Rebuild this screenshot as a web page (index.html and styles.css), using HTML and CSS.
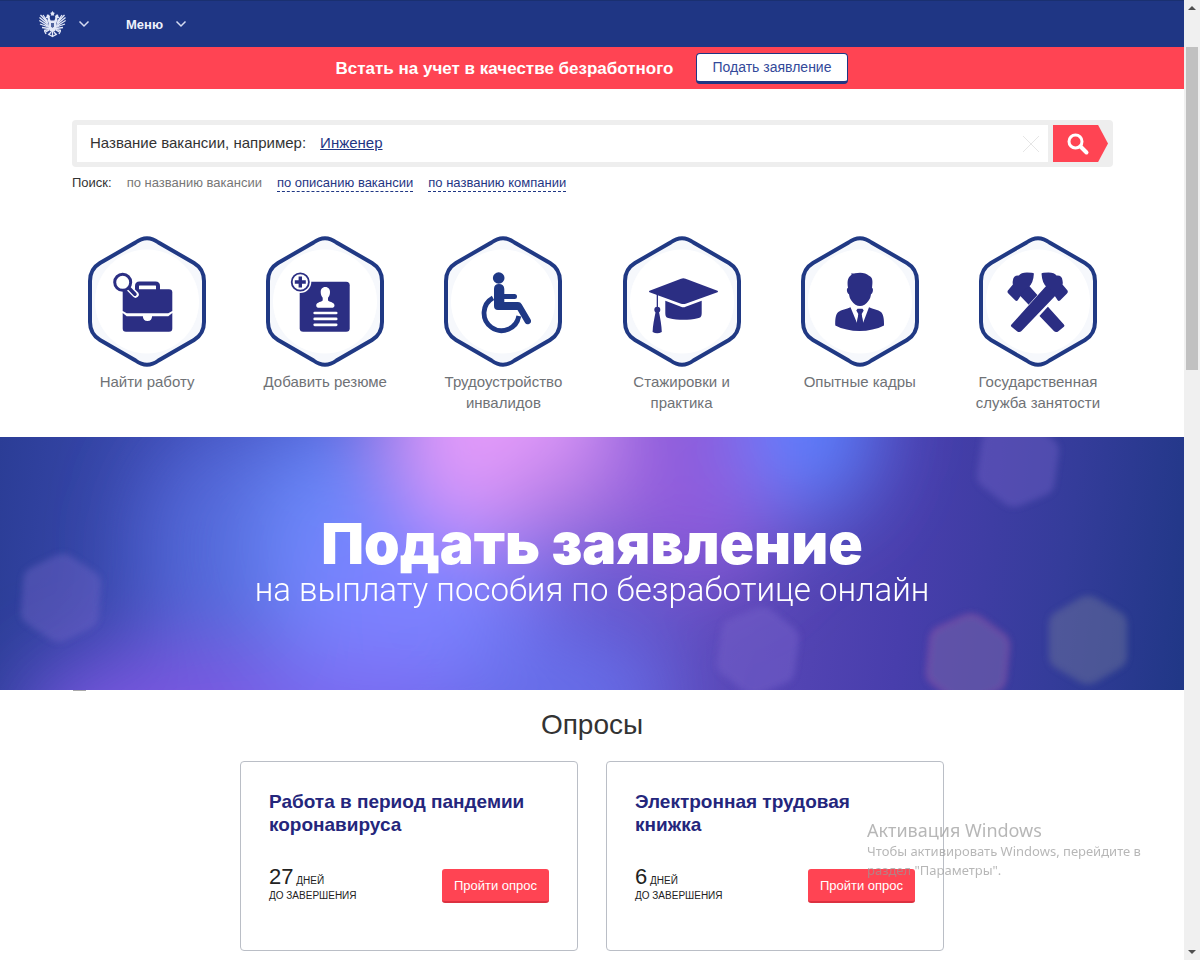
FILE: index.html
```html
<!DOCTYPE html>
<html lang="ru">
<head>
<meta charset="utf-8">
<title>Работа в России</title>
<link rel="stylesheet" href="styles.css">
</head>
<body>
<svg class="defs" aria-hidden="true">
  <symbol id="hex" viewBox="0 0 118 131">
    <path d="M47.500 6.500Q59-2 70.500 6.500L106 27Q116 33 116 45V86Q116 98 106 104L70.500 124.500Q59 133 47.500 124.500L12 104Q2 98 2 86V45Q2 33 12 27Z" fill="#f6f8fc" stroke="#203984" stroke-width="4"/>
    <circle cx="59" cy="65.500" r="52" fill="#fff"/>
  </symbol>
  <symbol id="chev" viewBox="0 0 12 8"><path d="M1.500 1.500L6 6l4.500-4.500" fill="none" stroke="#d5dcf2" stroke-width="1.500"/></symbol>
</svg>
<div class="page">
  <header class="top">
    <button class="top-btn" aria-label="Государственные сайты">
      <svg class="eagle" viewBox="0 0 27 27" fill="#e4e9f8">
        <path d="M13.500 0l1 1.500 1.500.5-1.200 1 .5 1.500h-3.600l.5-1.500-1.200-1 1.500-.5z"/>
        <path d="M8 3.500l2 .3 1 1.700-.3 1.500 1 3L10 12 8.500 9.500l.3-2.200L6.500 7l1-1.500zM19 3.500l-2 .3-1 1.700.3 1.500-1 3L17 12l1.500-2.500-.3-2.200 2.300-.3-1-1.500z"/>
        <path d="M10 9.500h7l1 6-1.500 4-3 2-3-2-1.500-4z"/>
        <g fill="none" stroke="#e4e9f8" stroke-width="1.300">
          <path d="M9 12L1.500 4M9 13.500L.5 6.500M9 15L.3 9.500M9.500 16L1 13M10 17.500L3 16.500M10 18.500l-5 1M8.500 10.500L4 4M18 12l7.500-8M18 13.500L26.500 6.500M18 15l8.700-5.500M17.500 16l8.500-3M17 17.500l7-1M17 18.500l5 1M18.500 10.500L23 4"/>
          <path d="M10 19l-4 2.500M5.500 20l1.500 3M17 19l4 2.500M21.500 20l-1.500 3M12 21l-2.500 3M15 21l2.500 3M13.500 20v6M9 23l4.500 2.500L18 23"/>
        </g>
        <path d="M12 12h3v3.500l-1.500 1.500-1.500-1.500z" fill="#52659f"/>
      </svg>
      <svg class="chev"><use href="#chev"/></svg>
    </button>
    <button class="top-btn">Меню <svg class="chev"><use href="#chev"/></svg></button>
  </header>
  <section class="notice">
    <strong>Встать на учет в качестве безработного</strong>
    <button class="notice-btn">Подать заявление</button>
  </section>

  <main>
    <div class="wrap">
      <form class="search">
        <div class="field">
          <label for="q">Название вакансии, например:</label>
          <a href="#">Инженер</a>
          <input id="q" type="text">
          <button class="clear" type="button" aria-label="Очистить"><svg viewBox="0 0 18 18"><path d="M1 1l16 16M17 1L1 17" stroke="#e6e6e6"/></svg></button>
        </div>
        <button class="go" type="button" aria-label="Найти"><svg viewBox="0 0 24 24" fill="none" stroke="#fff"><circle cx="9.500" cy="9.500" r="6.500" stroke-width="3"/><path d="M14.500 14.500l6 6" stroke-width="4" stroke-linecap="round"/></svg></button>
      </form>
      <nav class="modes">
        <span>Поиск:</span><span class="current">по названию вакансии</span>
        <a href="#">по описанию вакансии</a><a href="#">по названию компании</a>
      </nav>
      <nav class="services">
        <a href="#"><svg viewBox="0 0 118 131" fill="#2b2e83"><use href="#hex"/>
          <path d="M49 54v-4q0-2.500 2.500-2.500h16q2.500 0 2.500 2.500v4" fill="none" stroke="#2b2e83" stroke-width="4"/>
          <path d="M38 53.300h43q3.300 0 3.300 3.300V75l-4 2.300H38.700l-4-2.300V56.600q0-3.300 3.300-3.300z"/>
          <path d="M34.700 77l4 3.300h16.200q0 4.700 4.600 4.700t4.500-4.700h16.300l4-3.300v15.400q0 3.300-3.300 3.300H38q-3.300 0-3.300-3.300z"/>
          <path d="M40.500 51.500l7 7" stroke="#fff" stroke-width="6.500" stroke-linecap="round"/><circle cx="34.700" cy="46.300" r="8" fill="#fff" stroke="#2b2e83" stroke-width="3"/><path d="M41 52l6 6.200" stroke="#2b2e83" stroke-width="3.500" stroke-linecap="round"/></svg>
          <span>Найти работу</span></a>
        <a href="#"><svg viewBox="0 0 118 131" fill="#2b2e83"><use href="#hex"/>
          <rect x="33.700" y="45.700" width="50" height="50" rx="3.500"/>
          <circle cx="34.300" cy="46" r="11" fill="#fff"/><circle cx="34.300" cy="46" r="8.600" fill="#fff" stroke="#2b2e83" stroke-width="1.800"/><path d="M34.300 40.500v11M28.800 46h11" stroke="#2b2e83" stroke-width="3.400"/>
          <path fill="#fff" d="M59.300 51c3.200 0 4.700 2.400 4.700 5 0 2.800-1 4.400-2 5.700v2.500c0 1.500 6.500 1.800 6.500 5 0 2-1.200 2.500-3 2.500H53.200c-1.800 0-3-.5-3-2.500 0-3.200 6.500-3.500 6.500-5v-2.500c-1-1.300-2-2.900-2-5.700 0-2.600 1.400-5 4.600-5z"/>
          <path d="M48.700 77h21.500M48.700 82.900h21.500M48.700 88.800h21.500" stroke="#fff" stroke-width="2.700" stroke-linecap="round"/></svg>
          <span>Добавить резюме</span></a>
        <a href="#"><svg viewBox="0 0 118 131" fill="#1f3885"><use href="#hex"/>
          <circle cx="54.700" cy="42" r="5.800"/>
          <path d="M49 61.800A17.500 17.500 0 1 0 74.800 80" fill="none" stroke="#1f3885" stroke-width="4.800"/>
          <path d="M50 53q0-5 5-5t5.300 5v5h10.200q2.500 0 2.500 2.500T70.500 63H60.300v3H74q2.500 0 3.700 2.200l8.800 15q1.500 3-1 4.500-3 1.500-4.500-1L73.500 74H54q-4 0-4-4z"/></svg>
          <span>Трудоустройство инвалидов</span></a>
        <a href="#"><svg viewBox="0 0 118 131" fill="#2b2e83"><use href="#hex"/>
          <path d="M26.500 54.700l31.500-12q2.300-.8 4.600 0l31.900 12q1.300.7 0 1.500L62.600 67.700q-2.300.8-4.600 0L26.500 56.200q-1.300-.8 0-1.500z"/>
          <path d="M42.300 64.700l15.700 6q2.300 1 4.600 0l16.100-6V77c0 4-1.400 4.700-4 5.300-9 2-19.600 2-28.400 0-2.600-.6-4-1.300-4-5.300z"/>
          <path d="M33.700 56h1.300v15h-1.300z"/><circle cx="34.300" cy="73.700" r="3"/><path d="M32.600 76h3.400c1.300 7 2.600 13 2.800 20q-4.600 2.500-9.200 0c.2-7 1.700-13 3-20z"/></svg>
          <span>Стажировки и практика</span></a>
        <a href="#"><svg viewBox="0 0 118 131" fill="#2b2e83"><use href="#hex"/>
          <path d="M50.500 37q1.500 1 3.500.3c6-1.300 11-.4 14 2.400 4 1.500 3.800 6 3 12 1.700.5 1 5.800-1 6.500-.5 3-1 4.500-2.500 6.500-4.500 7-12.500 7-17 0-1.500-2-2-3.500-2.500-6.500-2-.7-3-6-1-6.500-.8-5.500-.8-10 3.500-13z"/>
          <path d="M49.500 71.300L56 87l1.300-9-2-3.500 1.200-1.800h5l1.200 1.800-2 3.500L62 87l6-15.700c4 2 9 2.300 12 4.700 2.500 2 3.200 8 3 13.500-14 7.300-35 7.300-48.700 0-.2-5.500.2-11.500 3-13.500 3-2.400 8.200-2.700 12.200-4.700z"/>
          <path d="M57.600 78.500h2.800l2 9-3.400 6-3.400-6z"/></svg>
          <span>Опытные кадры</span></a>
        <a href="#"><svg viewBox="0 0 118 131" fill="#2b2e83"><use href="#hex"/>
          <g transform="matrix(-1 0 0 1 117.400 0)"><path d="M32.500 88.500L68 49l10 9-35.500 37q-2 2-4.500.2l-5.500-4.500q-1.200-1 0-2.200z"/><path d="M62.500 37.500q1-1 7-1t8 3q5.500-.5 6 5 .5 2 0 4l5 6q1 1.500-.5 3l-7 7q-1.500 1-2.500-.5L74.500 58q-1-4-6-6.200-5.500-3.800-6-14.300z"/></g>
          <path d="M42 77l26-28.500 12 10-26 28.500z" fill="#fff"/>
          <path d="M32.500 88.500L68 49l10 9-35.500 37q-2 2-4.500.2l-5.500-4.500q-1.200-1 0-2.200z"/>
          <path d="M62.500 37.500q1-1 7-1t8 3q5.500-.5 6 5 .5 2 0 4l5 6q1 1.500-.5 3l-7 7q-1.500 1-2.500-.5L74.500 58q-1-4-6-6.200-5.500-3.800-6-14.300z"/></svg>
          <span>Государственная служба занятости</span></a>
      </nav>
    </div>

    <section class="banner">
      <svg class="bokeh" viewBox="0 0 1184 253" preserveAspectRatio="none" aria-hidden="true">
        <defs>
          <filter id="glow" filterUnits="userSpaceOnUse" x="-200" y="-250" width="1600" height="750"><feGaussianBlur stdDeviation="42"/></filter>
          <filter id="soft" x="-20%" y="-20%" width="140%" height="140%"><feGaussianBlur stdDeviation="3"/></filter>
          <path id="spot" d="M-8-42Q0-46 8-42L32-28Q39-24 39-16V16Q39 24 32 28L8 42Q0 46-8 42L-32 28Q-39 24-39 16V-16Q-39-24-32-28Z"/>
        </defs>
        <g filter="url(#glow)">
          <ellipse cx="230" cy="110" rx="90" ry="120" fill="#5268d8"/>
          <ellipse cx="330" cy="110" rx="75" ry="120" fill="#6a88fa"/>
          <ellipse cx="190" cy="290" rx="170" ry="80" fill="#7a56e0"/>
          <ellipse cx="410" cy="170" rx="110" ry="100" fill="#7c82ff"/>
          <ellipse cx="360" cy="275" rx="120" ry="50" fill="#7a68f0"/>
          <ellipse cx="560" cy="260" rx="110" ry="60" fill="#666eea"/>
          <ellipse cx="700" cy="30" rx="90" ry="120" fill="#8f5cdc"/>
          <ellipse cx="500" cy="-20" rx="110" ry="125" fill="#e49cfb"/>
          <ellipse cx="560" cy="60" rx="60" ry="50" fill="#b87de6"/>
          <ellipse cx="810" cy="-15" rx="66" ry="95" fill="#5c80ff"/>
        </g>
        <g filter="url(#soft)">
          <use href="#spot" transform="translate(61 161) rotate(4)" fill="#7566c8" opacity=".4"/>
          <use href="#spot" transform="translate(1018 26) rotate(8)" fill="#7565c8" opacity=".4"/>
          <use href="#spot" transform="translate(758 214) rotate(8)" fill="#735fc9" opacity=".55"/>
          <use href="#spot" transform="translate(968 222) rotate(6)" fill="#735faa" stroke="#9952a6" stroke-width="3" opacity=".6"/>
          <use href="#spot" transform="translate(1088 203)" fill="#68709a" opacity=".5"/>
        </g>
      </svg>
      <h1>Подать заявление</h1>
      <p>на выплату пособия по безработице онлайн</p>
      <i class="marker"></i>
    </section>

    <section class="polls">
      <h2>Опросы</h2>
      <div class="cards">
        <article class="card">
          <h3>Работа в период пандемии коронавируса</h3>
          <div class="row"><p><b>27</b> дней<br>до завершения</p><button>Пройти опрос</button></div>
        </article>
        <article class="card">
          <h3>Электронная трудовая книжка</h3>
          <div class="row"><p><b>6</b> дней<br>до завершения</p><button>Пройти опрос</button></div>
        </article>
      </div>
    </section>
  </main>
</div>
<div class="scroll" aria-hidden="true">
  <svg viewBox="0 0 16 16"><path d="M4 10l4-4 4 4z" fill="#505050"/></svg>
  <div class="track"><div class="thumb"></div></div>
  <svg viewBox="0 0 16 16"><path d="M4 6l4 4 4-4z" fill="#505050"/></svg>
</div>
<aside class="watermark">
  <strong>Активация Windows</strong>
  <p>Чтобы активировать Windows, перейдите в раздел "Параметры".</p>
</aside>
</body>
</html>
```

FILE: styles.css
```css
* { box-sizing: border-box; }
body {
  margin: 0;
  min-height: 100vh;
  display: flex;
  position: relative;
  font: 15px/21px "Liberation Sans", Arial, sans-serif;
  color: #333;
  background: #fff;
}
h1, h2, h3, p { margin: 0; }
button { font: inherit; border: 0; cursor: pointer; }
.defs { position: absolute; width: 0; height: 0; }
.page { flex: 1; min-width: 0; }

.top {
  height: 47px;
  padding: 0 39px;
  display: flex;
  align-items: center;
  gap: 36px;
  background: #1f3684;
  border-top: 1px solid #1a3070;
}
.top-btn {
  display: flex;
  align-items: center;
  gap: 12px;
  padding: 0;
  background: none;
  color: #eef1fb;
  font-size: 13px;
  font-weight: bold;
}
.eagle { width: 27px; height: 27px; }
.chev { width: 12px; height: 8px; }

.notice {
  min-height: 42px;
  display: flex;
  align-items: center;
  justify-content: center;
  gap: 22px;
  background: #ff4453;
  color: #fff;
  font-size: 17px;
}
.notice-btn {
  height: 31px;
  padding: 0 16px;
  border: 1px solid #1f3684;
  border-bottom-width: 3px;
  border-radius: 4px;
  background: #fff;
  color: #33499a;
  font-size: 14px;
}

.wrap { padding: 31px 71px 24px 72px; }
.search {
  display: flex;
  gap: 5px;
  padding: 5px;
  border-radius: 4px;
  background: #eee;
}
.field {
  flex: 1;
  height: 37px;
  display: flex;
  align-items: center;
  gap: 14px;
  padding: 0 8px 2px 13px;
  background: #fff;
}
.field a { color: #1f3684; }
.field input {
  flex: 1;
  min-width: 0;
  border: 0;
  outline: 0;
  font: inherit;
}
.clear { padding: 0; background: none; height: 18px; margin-top: 3px; }
.clear svg { display: block; width: 18px; height: 18px; }
.go {
  width: 55px;
  padding: 0 6px 0 0;
  display: grid;
  place-items: center;
  background: #ff4453;
  clip-path: polygon(0 0, 82% 0, 100% 50%, 82% 100%, 0 100%);
}
.go svg { width: 24px; height: 24px; }
.modes {
  display: flex;
  gap: 15px;
  margin-top: 8px;
  font-size: 13px;
  line-height: 16px;
}
.modes .current { color: #777; }
.modes a {
  color: #1f3684;
  text-decoration: none;
  border-bottom: 1px dashed #1f3684;
}
.services {
  display: grid;
  grid-template-columns: repeat(6, 1fr);
  margin: 44px -14px 0;
}
.services a {
  display: flex;
  flex-direction: column;
  align-items: center;
  gap: 4px;
  padding: 0 24px;
  text-align: center;
  text-decoration: none;
  color: #6f7276;
}
.services svg { width: 118px; height: 131px; }

.banner {
  position: relative;
  min-height: 253px;
  padding-bottom: 4px;
  display: flex;
  flex-direction: column;
  align-items: center;
  justify-content: center;
  color: #fff;
  background: linear-gradient(97deg, #2b3d96 0%, #3c4ab2 14%, #5060d2 26%, #6a62dc 45%, #5a48b8 62%, #483eac 76%, #343c9a 89%, #203786 100%);
}
.bokeh { position: absolute; inset: 0; width: 100%; height: 100%; }
.banner h1 {
  position: relative;
  font: 900 57px/56px Inter, sans-serif;
}
.banner p {
  position: relative;
  font: 300 33px/36px Roboto, sans-serif;
}
.marker {
  position: absolute;
  left: 73px;
  bottom: -1px;
  width: 13px;
  height: 1px;
  background: #aaa;
}

.polls {
  max-width: 704px;
  margin: 0 auto;
  padding: 18px 0 9px;
}
.polls h2 {
  font-size: 28px;
  line-height: 34px;
  font-weight: normal;
  text-align: center;
}
.cards {
  display: grid;
  grid-template-columns: 1fr 1fr;
  gap: 28px;
  margin-top: 19px;
}
.card {
  min-height: 190px;
  padding: 28px;
  border: 1px solid #babec6;
  border-radius: 4px;
}
.card h3 {
  font-size: 19px;
  line-height: 23px;
  color: #24267c;
}
.row {
  display: flex;
  justify-content: space-between;
  align-items: flex-start;
  margin-top: 33px;
}
.row p {
  font-size: 10px;
  line-height: 15px;
  text-transform: uppercase;
  color: #222;
}
.row b { font-size: 22px; font-weight: normal; }
.row button {
  height: 34px;
  padding: 0 12px;
  border-radius: 3px;
  border-bottom: 2px solid #dc3140;
  background: #ff4453;
  color: #fff;
  font-size: 13px;
}

.scroll {
  width: 16px;
  display: flex;
  flex-direction: column;
  background: #f0f0f0;
}
.scroll svg { width: 16px; height: 16px; }
.track { flex: 1; padding: 31px 2px 0; }
.thumb { height: 36%; background: #c1c1c1; }
.watermark {
  position: absolute;
  right: 33px;
  bottom: 80px;
  width: 300px;
  font: 13px/19px "Noto Sans", sans-serif;
  color: #999;
  opacity: .7;
}
.watermark strong { font-size: 18px; line-height: 23px; font-weight: normal; }
```
